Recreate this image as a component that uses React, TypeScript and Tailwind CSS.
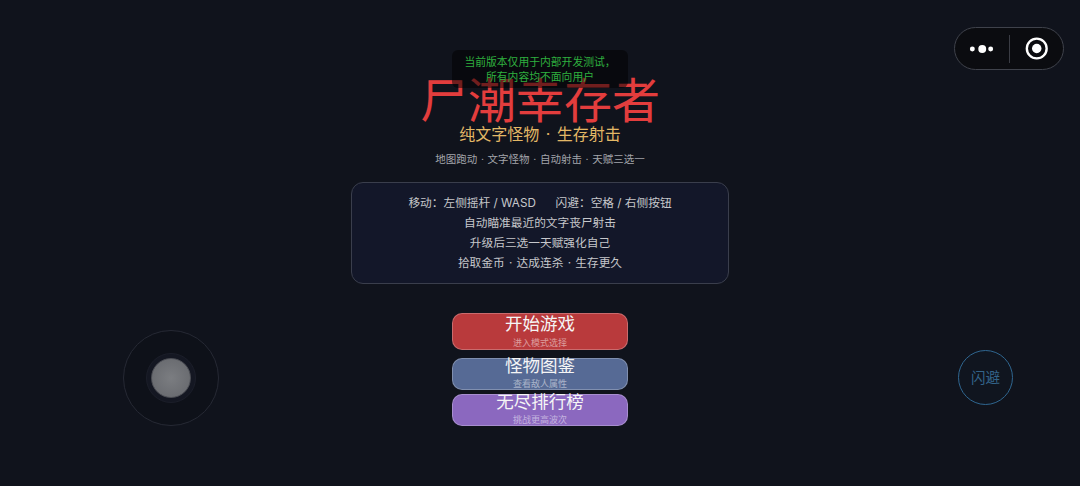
import React from "react";

const font = { fontFamily: '"Inter", "Noto Sans CJK SC", sans-serif' };

function MenuButton({ title, sub, cls, titleCls }: { title: string; sub: string; cls: string; titleCls: string }) {
  return (
    <div className={`flex w-[176px] flex-col items-center rounded-[10px] border border-white/25 ${cls}`}>
      <div className={`text-[17.5px] leading-[22px] text-[#f5f5f5] ${titleCls}`}>{title}</div>
      <div className="text-[9px] leading-[11px] text-white/50">{sub}</div>
    </div>
  );
}

export default function App() {
  return (
    <div className="relative h-[486px] w-[1080px] overflow-hidden bg-[#10131c]" style={font}>
      <div className="flex flex-col items-center pt-[73px]">
        <h1 className="h-[56px] text-[48px] leading-[56px] font-normal text-[#e33d3d]">尸潮幸存者</h1>
        <div className="mt-[-7px] h-[24px] text-[16px] leading-[24px] text-[#e3b866] [word-spacing:2px]">纯文字怪物 · 生存射击</div>
        <div className="mt-[6px] h-[16px] text-[10.5px] leading-[16px] text-[#a3a5ab] [word-spacing:0.7px]">地图跑动 · 文字怪物 · 自动射击 · 天赋三选一</div>
        <div className="mt-[14px] flex h-[102px] w-[378px] flex-col items-center justify-center rounded-[12px] border border-[#3a3e4c] bg-[#131729] text-[11.7px] leading-[20.2px] text-[#c6c7cb]">
          <div className="whitespace-pre">移动：左侧摇杆 / WASD      闪避：空格 / 右侧按钮</div>
          <div>自动瞄准最近的文字丧尸射击</div>
          <div>升级后三选一天赋强化自己</div>
          <div className="[word-spacing:1px]">拾取金币 · 达成连杀 · 生存更久</div>
        </div>
        <div className="mt-[29px] flex flex-col items-center gap-[4px]">
          <MenuButton title="开始游戏" sub="进入模式选择" cls="mb-[4px] h-[37px] bg-[#b93a3c]" titleCls="mt-[-1px] mb-[2px]" />
          <MenuButton title="怪物图鉴" sub="查看敌人属性" cls="h-[32px] bg-[#566a95]" titleCls="mt-[-4px] mb-[1px]" />
          <MenuButton title="无尽排行榜" sub="挑战更高波次" cls="h-[32px] bg-[#8b68bf]" titleCls="mt-[-4px] mb-[1px]" />
        </div>
      </div>

      {/* dev notice, floats over the title */}
      <div className="absolute left-[452px] top-[50px] flex h-[38px] w-[176px] flex-col items-center justify-center rounded-[6px] bg-black/50 pt-[2px] text-[10.8px] leading-[15px] text-[#2fb03f]">
        <div>当前版本仅用于内部开发测试，</div>
        <div>所有内容均不面向用户</div>
      </div>

      {/* capsule */}
      <div className="absolute left-[954px] top-[27px] flex h-[43px] w-[110px] items-center rounded-full border border-[#3f424b] bg-[#0b0c10]">
        <svg width="54" height="41" viewBox="0 0 54 41" fill="#fff">
          <circle cx="17.5" cy="21" r="2.5" />
          <circle cx="27.5" cy="21" r="4" />
          <circle cx="36" cy="21" r="2.5" />
        </svg>
        <div className="h-[28px] w-px bg-[#3a3c44]" />
        <svg width="54" height="41" viewBox="0 0 54 41" fill="none">
          <circle cx="28" cy="20.5" r="10" stroke="#fff" strokeWidth="2.4" />
          <circle cx="28" cy="20.5" r="4.8" fill="#fff" />
        </svg>
      </div>

      {/* joystick */}
      <div className="absolute left-[123px] top-[330px] flex h-[96px] w-[96px] items-center justify-center rounded-full border border-[#262934] bg-[#0e1119]">
        <div className="flex h-[50px] w-[50px] items-center justify-center rounded-full border border-[#1b1e29] bg-[#141722]">
          <div className="mb-px mr-px h-[40px] w-[40px] rounded-full border border-[#4c4e55] bg-[radial-gradient(circle,#7b7d81,#64666b)]" />
        </div>
      </div>

      {/* dodge */}
      <div className="absolute left-[958px] top-[350px] flex h-[55px] w-[55px] items-center justify-center rounded-full border-[1.5px] border-[#2f6690] bg-[#10151f] text-[14.5px] text-[#336389]">
        闪避
      </div>
    </div>
  );
}
